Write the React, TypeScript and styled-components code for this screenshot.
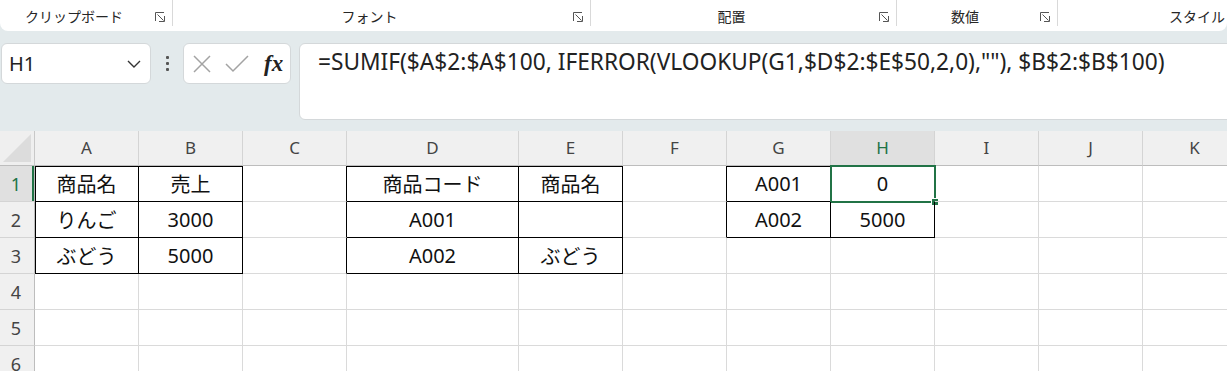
import React from 'react';
import styled, { createGlobalStyle } from 'styled-components';

const GlobalStyle = createGlobalStyle`
  html, body { margin: 0; padding: 0; background: #fff; overflow: hidden; }
  body { font-family: "Noto Sans", "Noto Sans CJK JP", sans-serif; }
  #root { width: 1227px; height: 371px; overflow: hidden; }
`;

const GREEN = '#217346';

const Page = styled.div`
  width: 1227px;
  height: 371px;
  overflow: hidden;
  background: #e3eaec;
  display: flex;
  flex-direction: column;
`;

/* ---------- Ribbon ---------- */
const Ribbon = styled.div`
  height: 31px;
  flex-shrink: 0;
  background: #fff;
  display: flex;
  border-radius: 0 0 8px 8px;
  overflow: hidden;
`;

const Group = styled.div<{ $w: number }>`
  width: ${(p) => p.$w}px;
  flex: none;
  height: 100%;
  display: flex;
  align-items: center;
`;

const GroupLabel = styled.div`
  flex: 1;
  text-align: center;
  font-family: "Noto Sans CJK JP", sans-serif;
  font-size: 14px;
  color: #262626;
`;

const Launcher = styled.div`
  width: 24px;
  display: flex;
  justify-content: center;
  align-items: center;
  padding-top: 2px;
`;

const GroupSep = styled.div`
  width: 1px;
  height: 26px;
  align-self: flex-start;
  background: #d9d9d9;
  flex: none;
`;

const LauncherIcon = () => (
  <svg width="10" height="10" viewBox="0 0 10 10" fill="none" stroke="#555" strokeWidth="1">
    <path d="M0.5 9V0.5H9" />
    <path d="M2.5 2.5L8.5 8.5" />
    <path d="M4 9.5H9.5V4" />
  </svg>
);

/* ---------- Formula bar ---------- */
const FormulaBar = styled.div`
  height: 100px;
  flex-shrink: 0;
  box-sizing: border-box;
  padding: 12px 0 0 1px;
  display: flex;
  align-items: flex-start;
`;

const NameBox = styled.div`
  width: 150px;
  height: 41px;
  box-sizing: border-box;
  background: #fff;
  border: 1px solid #d4d8da;
  border-radius: 6px;
  display: flex;
  align-items: center;
  justify-content: space-between;
  padding: 0 9px 0 7px;
  font-size: 20px;
  color: #222;
`;

const DotsHandle = styled.div`
  width: 32px;
  height: 41px;
  display: flex;
  flex-direction: column;
  align-items: center;
  justify-content: center;
  gap: 3px;
`;

const Dot = styled.span`
  width: 3px;
  height: 3px;
  background: #555;
  border-radius: 1px;
`;

const FnBox = styled.div`
  width: 108px;
  height: 41px;
  box-sizing: border-box;
  background: #fff;
  border: 1px solid #d4d8da;
  border-radius: 6px;
  display: flex;
  align-items: center;
  padding: 0 0 0 9px;
  gap: 14px;
`;

const FxText = styled.span`
  font-family: "Liberation Serif", serif;
  font-style: italic;
  font-weight: bold;
  font-size: 23px;
  color: #222;
  margin-left: 1px;
  line-height: 1;
`;

const FormulaInput = styled.div`
  flex: 1;
  margin-left: 8px;
  margin-right: -12px;
  height: 77px;
  box-sizing: border-box;
  background: #fff;
  border: 1px solid #d4d8da;
  border-radius: 6px;
  padding: 2px 18px;
  font-size: 22.7px;
  line-height: 32px;
  color: #222;
  white-space: nowrap;
`;

/* ---------- Sheet ---------- */
const Sheet = styled.div`
  flex: 1;
  background: #fff;
  display: grid;
  grid-template-columns: 35px 104px 104px 104px 172px 104px 104px 104px 104px 104px 104px 104px;
  grid-template-rows: 35px;
  grid-auto-rows: 36px;
  overflow: hidden;
`;

const Corner = styled.div`
  background: #efefef;
  border-right: 1px solid #c8c8c8;
  border-bottom: 1px solid #bdbdbd;
  box-sizing: border-box;
  display: flex;
  align-items: flex-end;
  justify-content: flex-end;
  padding: 0 3px 3px 0;
`;

const CornerTri = styled.div`
  width: 0;
  height: 0;
  border-left: 28px solid transparent;
  border-bottom: 28px solid #dcdcdc;
`;

const ColHead = styled.div<{ $sel?: boolean }>`
  box-sizing: border-box;
  background: ${(p) => (p.$sel ? '#e0e0e0' : '#f0f0f0')};
  border-right: 1px solid #d4d4d4;
  border-bottom: 1px solid #bdbdbd;
  display: flex;
  align-items: center;
  justify-content: center;
  font-size: 17px;
  color: ${(p) => (p.$sel ? GREEN : '#444')};
  padding-bottom: 1px;
`;

const RowHead = styled.div<{ $sel?: boolean }>`
  box-sizing: border-box;
  background: ${(p) => (p.$sel ? '#e0e0e0' : '#f0f0f0')};
  border-right: 1px solid #bdbdbd;
  border-bottom: 1px solid #d4d4d4;
  box-shadow: ${(p) => (p.$sel ? `inset -2px 0 0 ${GREEN}` : 'none')};
  display: flex;
  align-items: center;
  justify-content: center;
  font-size: 18px;
  color: ${(p) => (p.$sel ? GREEN : '#444')};
  padding-right: 2px;
`;

const Cell = styled.div<{ $r: boolean; $b: boolean; $t: boolean; $l: boolean }>`
  position: relative;
  box-sizing: border-box;
  border-right: 1px solid ${(p) => (p.$r ? '#000' : '#dadada')};
  border-bottom: 1px solid ${(p) => (p.$b ? '#000' : '#dadada')};
  box-shadow: ${(p) =>
    [p.$t ? 'inset 0 1px 0 #000' : '', p.$l ? 'inset 1px 0 0 #000' : ''].filter(Boolean).join(', ') || 'none'};
  display: flex;
  align-items: center;
  justify-content: center;
  font-size: 20px;
  color: #111;
  white-space: nowrap;
`;

const Selection = styled.div`
  position: absolute;
  top: -1px;
  left: -1px;
  right: -2px;
  bottom: -2px;
  border: 2px solid ${GREEN};
  pointer-events: none;
`;

const FillHandle = styled.div`
  position: absolute;
  right: -5px;
  bottom: -5px;
  width: 6px;
  height: 6px;
  background: ${GREEN};
  border: 1px solid #fff;
`;

const COLS = ['A', 'B', 'C', 'D', 'E', 'F', 'G', 'H', 'I', 'J', 'K'];
const ROWS = 6;

const DATA: Record<string, string> = {
  A1: '商品名', B1: '売上', D1: '商品コード', E1: '商品名', G1: 'A001', H1: '0',
  A2: 'りんご', B2: '3000', D2: 'A001', G2: 'A002', H2: '5000',
  A3: 'ぶどう', B3: '5000', D3: 'A002', E3: 'ぶどう',
};

const TABLES = [
  { c0: 0, c1: 1, r0: 1, r1: 3 },
  { c0: 3, c1: 4, r0: 1, r1: 3 },
  { c0: 6, c1: 7, r0: 1, r1: 2 },
];

const inTable = (c: number, r: number) =>
  TABLES.some((t) => c >= t.c0 && c <= t.c1 && r >= t.r0 && r <= t.r1);

const GROUPS = [
  { label: 'クリップボード', w: 172 },
  { label: 'フォント', w: 417 },
  { label: '配置', w: 305 },
  { label: '数値', w: 160 },
  { label: 'スタイル', w: 278 },
];

export default function App() {
  const cells: React.ReactNode[] = [];
  cells.push(
    <Corner key="corner">
      <CornerTri />
    </Corner>
  );
  COLS.forEach((c) =>
    cells.push(
      <ColHead key={`h${c}`} $sel={c === 'H'}>
        {c}
      </ColHead>
    )
  );
  for (let r = 1; r <= ROWS; r++) {
    cells.push(
      <RowHead key={`r${r}`} $sel={r === 1}>
        {r}
      </RowHead>
    );
    COLS.forEach((c, ci) => {
      const me = inTable(ci, r);
      const id = `${c}${r}`;
      cells.push(
        <Cell
          key={id}
          $r={me || inTable(ci + 1, r)}
          $b={me || inTable(ci, r + 1)}
          $t={me && r === 1}
          $l={me && ci === 0}
        >
          {DATA[id] ?? ''}
          {id === 'H1' && (
            <Selection>
              <FillHandle />
            </Selection>
          )}
        </Cell>
      );
    });
  }

  return (
    <Page>
      <GlobalStyle />
      <Ribbon>
        {GROUPS.map((g, i) => (
          <React.Fragment key={g.label}>
            {i > 0 && <GroupSep />}
            <Group $w={g.w}>
              <GroupLabel>{g.label}</GroupLabel>
              {i < 4 && (
                <Launcher>
                  <LauncherIcon />
                </Launcher>
              )}
            </Group>
          </React.Fragment>
        ))}
      </Ribbon>
      <FormulaBar>
        <NameBox>
          <span>H1</span>
          <svg width="14" height="8" viewBox="0 0 14 8" fill="none" stroke="#333" strokeWidth="1.4">
            <path d="M1 1l6 6 6-6" />
          </svg>
        </NameBox>
        <DotsHandle>
          <Dot />
          <Dot />
          <Dot />
        </DotsHandle>
        <FnBox>
          <svg width="18" height="18" viewBox="0 0 18 18" stroke="#a3a3a3" strokeWidth="1.5" fill="none">
            <path d="M1 1l16 16M17 1L1 17" />
          </svg>
          <svg width="24" height="18" viewBox="0 0 24 18" stroke="#a3a3a3" strokeWidth="1.5" fill="none">
            <path d="M1 9l7 7L23 1" />
          </svg>
          <FxText>fx</FxText>
        </FnBox>
        <FormulaInput>=SUMIF($A$2:$A$100, IFERROR(VLOOKUP(G1,$D$2:$E$50,2,0),""), $B$2:$B$100)</FormulaInput>
      </FormulaBar>
      <Sheet>{cells}</Sheet>
    </Page>
  );
}
